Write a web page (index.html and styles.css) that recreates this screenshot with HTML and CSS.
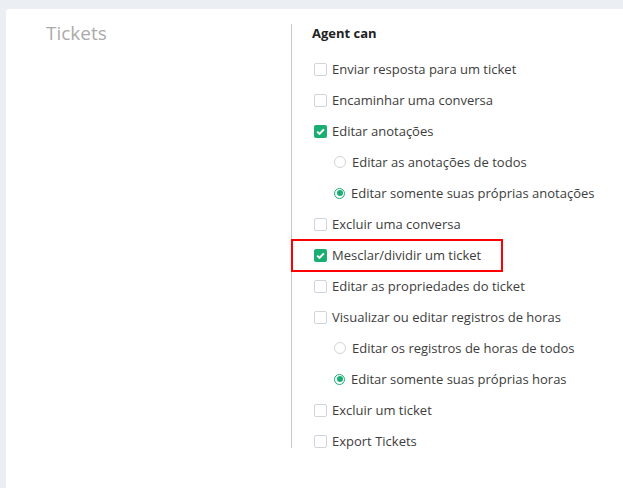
FILE: index.html
```html
<!DOCTYPE html>
<html>
<head>
<meta charset="utf-8">
<link rel="stylesheet" href="styles.css">
</head>
<body>
<div class="card">
  <div class="left">
    <h2 class="section-title">Tickets</h2>
  </div>
  <div class="right">
    <div class="heading">Agent can</div>
    <ul class="perms">
      <li class="perm"><span class="cb"></span>Enviar resposta para um ticket</li>
      <li class="perm"><span class="cb"></span>Encaminhar uma conversa</li>
      <li class="perm"><span class="cb checked"><svg viewBox="0 0 13 13" width="13" height="13"><path d="M3.2 6.6 L5.5 8.9 L9.9 4.4" fill="none" stroke="#fff" stroke-width="2"/></svg></span>Editar anotações</li>
      <li class="perm sub"><span class="rb"></span>Editar as anotações de todos</li>
      <li class="perm sub"><span class="rb on"></span>Editar somente suas próprias anotações</li>
      <li class="perm"><span class="cb"></span>Excluir uma conversa</li>
      <li class="perm highlight"><span class="cb checked"><svg viewBox="0 0 13 13" width="13" height="13"><path d="M3.2 6.6 L5.5 8.9 L9.9 4.4" fill="none" stroke="#fff" stroke-width="2"/></svg></span>Mesclar/dividir um ticket</li>
      <li class="perm"><span class="cb"></span>Editar as propriedades do ticket</li>
      <li class="perm"><span class="cb"></span>Visualizar ou editar registros de horas</li>
      <li class="perm sub"><span class="rb"></span>Editar os registros de horas de todos</li>
      <li class="perm sub"><span class="rb on"></span>Editar somente suas próprias horas</li>
      <li class="perm"><span class="cb"></span>Excluir um ticket</li>
      <li class="perm"><span class="cb"></span>Export Tickets</li>
    </ul>
  </div>
</div>
</body>
</html>
```
FILE: styles.css
```css
html, body {
  margin: 0;
  padding: 0;
  background: #ebeef3;
  height: 100%;
  overflow: hidden;
}
body {
  font-family: "Open Sans", "Noto Sans", sans-serif;
  color: #333;
}
.card {
  background: #fff;
  margin: 9px 0 0 6px;
  border-top-left-radius: 3px;
  min-height: 479px;
  display: flex;
  padding-top: 15px;
  box-sizing: border-box;
}
.left {
  width: 245px;
  padding-left: 40px;
  flex: none;
}
.section-title {
  margin: -3px 0 0 0;
  font-size: 19px;
  font-weight: 400;
  color: #ababab;
  line-height: 24px;
}
.right {
  border-left: 1px solid #c9c9c9;
  padding-left: 20px;
  height: 424px;
}
.heading {
  font-size: 13px;
  font-weight: 700;
  color: #222;
  line-height: 18px;
}
.perms {
  list-style: none;
  margin: 18px 0 0 0;
  padding: 0;
  display: flex;
  flex-direction: column;
  gap: 13px;
}
.perm {
  display: flex;
  align-items: center;
  height: 18px;
  font-size: 13px;
  color: #3d3d3d;
  padding-left: 2px;
  white-space: nowrap;
}
.perm.sub {
  padding-left: 22px;
}
.cb {
  width: 11px;
  height: 11px;
  border: 1px solid #cfd5dc;
  border-radius: 2px;
  margin-right: 5px;
  flex: none;
  display: inline-flex;
}
.cb.checked {
  width: 13px;
  height: 13px;
  border: none;
  background: #1aae72;
}
.rb {
  width: 10px;
  height: 10px;
  border: 1px solid #d0d4d8;
  border-radius: 50%;
  margin-right: 6px;
  flex: none;
  position: relative;
}
.rb.on {
  border: 1.5px solid #1aae72;
  width: 9px;
  height: 9px;
}
.rb.on::after {
  content: "";
  position: absolute;
  left: 1.5px;
  top: 1.5px;
  width: 6px;
  height: 6px;
  border-radius: 50%;
  background: #1aae72;
}
.highlight {
  align-self: flex-start;
  border: 2px solid #ff0000;
  margin: -7.5px 0 -7.5px -21px;
  padding: 5.5px 20px 5.5px 21px;
}
```
